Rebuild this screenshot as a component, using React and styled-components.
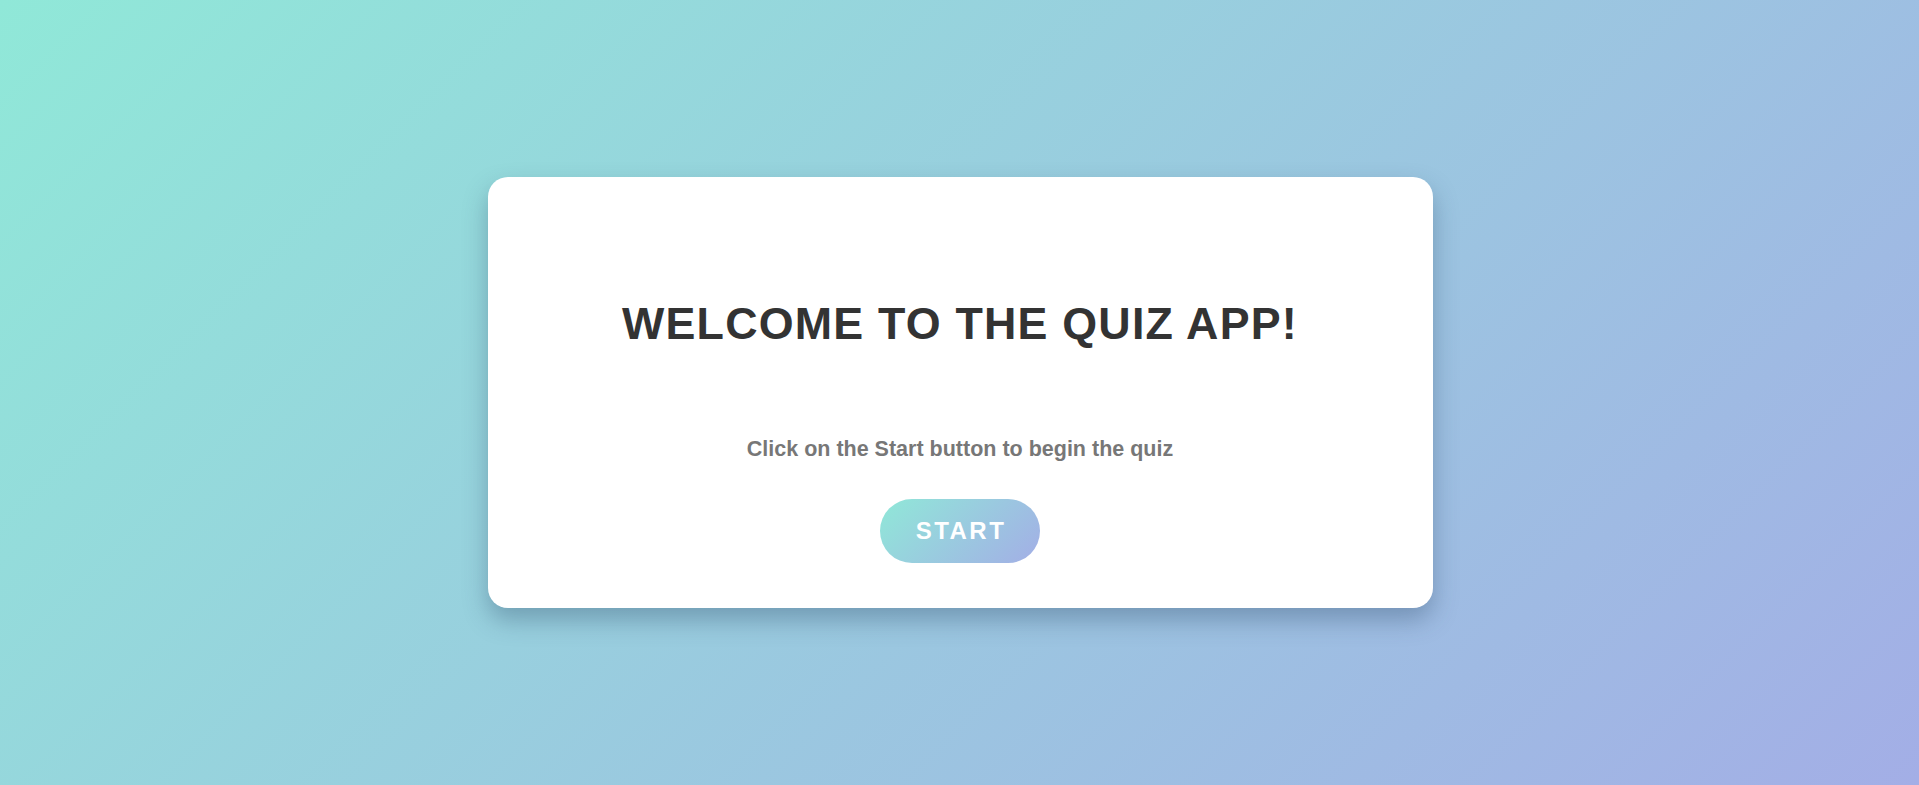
import React from "react";
import styled, { createGlobalStyle } from "styled-components";

const GlobalStyle = createGlobalStyle`
	* {
		box-sizing: border-box;
	}

	html, body {
		margin: 0;
		padding: 0;
	}

	body {
		font-family: "Liberation Sans", Arial, sans-serif;
	}
`

const Page = styled.main`
	min-height: 100vh;
	display: flex;
	align-items: center;
	justify-content: center;
	background: linear-gradient(135deg, #90e8d8 0%, #a3aee6 100%);
`

const Card = styled.section`
	width: 945px;
	height: 431px;
	margin-left: 1px;
	background: #fff;
	border-radius: 20px;
	box-shadow: 0 12px 24px rgba(40, 70, 100, 0.35);
	padding: 121px 40px 44px;
	display: flex;
	flex-direction: column;
	align-items: center;
	text-align: center;
`

const Title = styled.h1`
	margin: 0;
	font-size: 44.8px;
	font-weight: 700;
	letter-spacing: 1.2px;
	color: #333;
	text-transform: uppercase;
`

const Intro = styled.p`
	margin: 88px 0 0;
	font-size: 21.5px;
	font-weight: 700;
	color: #777;
`

const StartButton = styled.button`
	margin-top: 37px;
	border: none;
	border-radius: 40px;
	padding: 18px 34px 18px 36px;
	font-family: inherit;
	font-size: 24px;
	font-weight: 700;
	letter-spacing: 2.5px;
	color: #fff;
	background: linear-gradient(135deg, #90e8d8 0%, #a3aee6 100%);
	cursor: pointer;
`

const App = () => {
	return (
		<Page>
			<GlobalStyle />
			<Card>
				<Title>Welcome to the Quiz App!</Title>
				<Intro>Click on the Start button to begin the quiz</Intro>
				<StartButton>START</StartButton>
			</Card>
		</Page>
	);
};

export default App;
